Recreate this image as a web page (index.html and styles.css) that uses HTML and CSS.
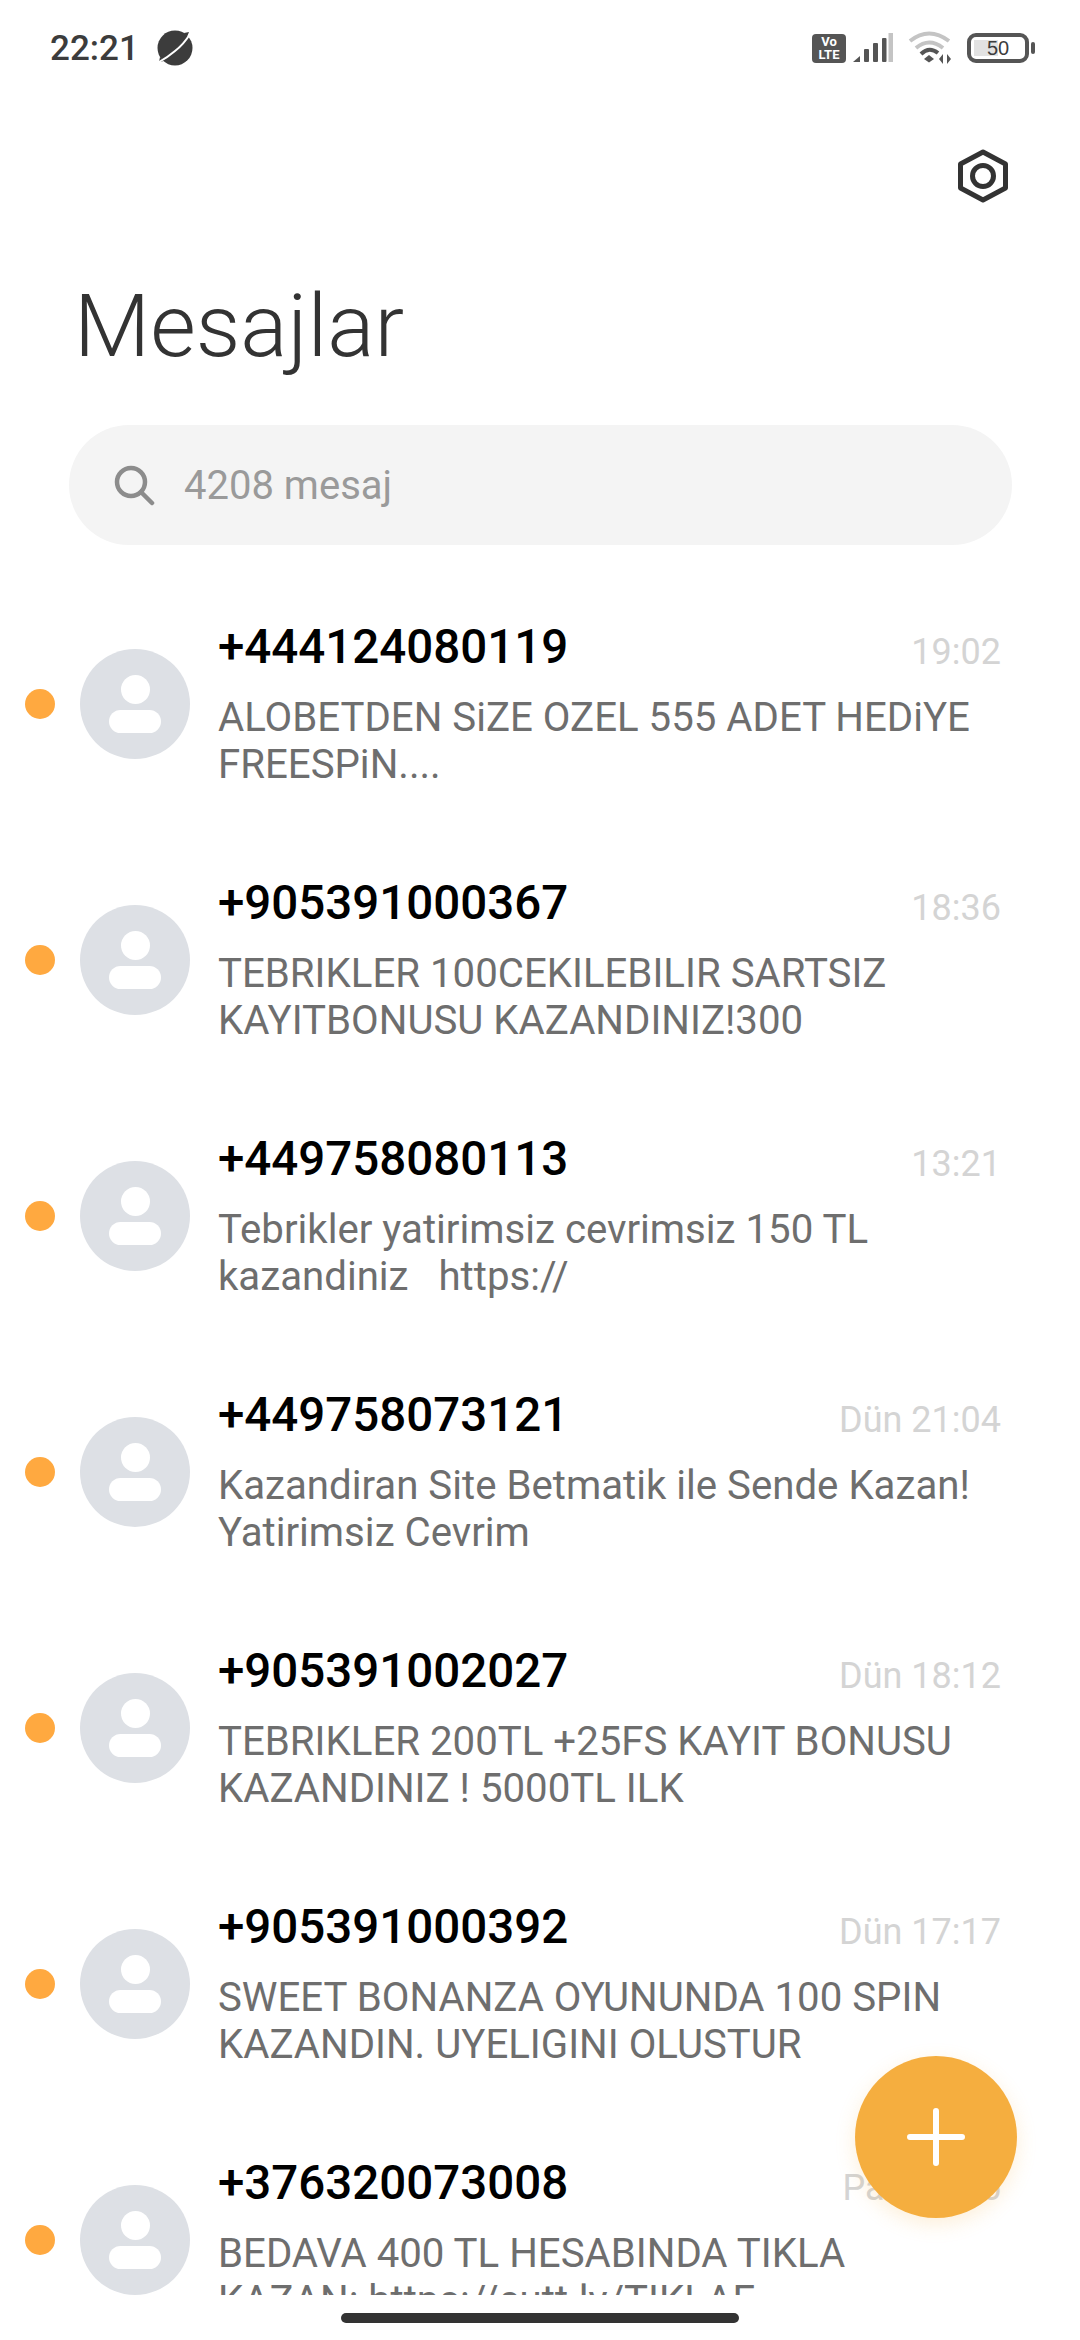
FILE: index.html
```html
<!DOCTYPE html>
<html lang="tr">
<head>
    <meta charset="UTF-8">
    <meta name="viewport" content="width=device-width, initial-scale=1.0">
    <title>Mesajlar</title>
    <link rel="stylesheet" href="styles.css">
</head>
<body>
<div class="screen">
    <div class="status-bar">
        <span class="clock">22:21</span>
        <svg class="planet" width="38" height="36" viewBox="0 0 38 36">
            <circle cx="19" cy="18" r="17.500" fill="#3c3c3c"/>
            <path d="M28 3 L33 2 L31 7 Z M4 27 L3 32 L8 31 Z" fill="#3c3c3c"/>
            <path d="M34 4 Q28 14 19 21 Q12 27 3 32" fill="none" stroke="#fff" stroke-width="2"/>
        </svg>
        <div class="status-right">
            <div class="volte"><span>Vo</span><span>LTE</span></div>
            <svg class="signal" width="40" height="30" viewBox="0 0 40 30">
                <path d="M0 29 L7 23 V29 Z" fill="#555"/>
                <rect x="11" y="16" width="5" height="13" rx="1" fill="#555"/>
                <rect x="20" y="10" width="5" height="19" rx="1" fill="#555"/>
                <rect x="29" y="5" width="4.500" height="24" rx="1" fill="#555"/>
                <rect x="35.500" y="0" width="4.500" height="29" fill="#c4c4c4"/>
            </svg>
            <svg class="wifi" width="44" height="34" viewBox="0 0 44 34">
                <path d="M2 10 Q21 -5 41 10" fill="none" stroke="#c4c4c4" stroke-width="4"/>
                <path d="M8 17 Q21 6 35 17" fill="none" stroke="#c4c4c4" stroke-width="4"/>
                <path d="M13 23 Q21 15 30 22" fill="none" stroke="#555" stroke-width="4"/>
                <path d="M16 28 L21 24 L26 28 L21 31.500 Z" fill="#555"/>
                <path d="M35 23 V33 L31 28 Z M39 23 L43 28 L39 33 Z" fill="#555"/>
            </svg>
            <div class="battery">
                <div class="battery-body">
                    <div class="battery-fill"></div>
                    <span class="battery-text">50</span>
                </div>
                <div class="battery-nub"></div>
            </div>
        </div>
    </div>

    <div class="top-row">
        <svg width="50" height="54" viewBox="0 0 50 54">
            <path d="M25 3 L47.500 15 V39 L25 51 L2.500 39 V15 Z" fill="none" stroke="#333" stroke-width="5" stroke-linejoin="round"/>
            <circle cx="25" cy="27" r="10.500" fill="none" stroke="#333" stroke-width="5"/>
        </svg>
    </div>

    <h1 class="title">Mesajlar</h1>

    <div class="search">
        <svg width="42" height="42" viewBox="0 0 42 42">
            <circle cx="18" cy="18" r="14" fill="none" stroke="#8c8c8c" stroke-width="4.500"/>
            <path d="M28 28 L39 39" stroke="#8c8c8c" stroke-width="4.500" stroke-linecap="round"/>
        </svg>
        <span>4208 mesaj</span>
    </div>

    <div class="list">
        <div class="row">
            <div class="dot"></div>
            <div class="avatar"><div class="avatar-head"></div><div class="avatar-body"></div></div>
            <div class="content">
                <div class="head"><span class="name">+444124080119</span><span class="time">19:02</span></div>
                <div class="msg">ALOBETDEN SiZE OZEL 555 ADET HEDiYE<br>FREESPiN....</div>
            </div>
        </div>
        <div class="row">
            <div class="dot"></div>
            <div class="avatar"><div class="avatar-head"></div><div class="avatar-body"></div></div>
            <div class="content">
                <div class="head"><span class="name">+905391000367</span><span class="time">18:36</span></div>
                <div class="msg">TEBRIKLER 100CEKILEBILIR SARTSIZ<br>KAYITBONUSU KAZANDINIZ!300</div>
            </div>
        </div>
        <div class="row">
            <div class="dot"></div>
            <div class="avatar"><div class="avatar-head"></div><div class="avatar-body"></div></div>
            <div class="content">
                <div class="head"><span class="name">+449758080113</span><span class="time">13:21</span></div>
                <div class="msg">Tebrikler yatirimsiz cevrimsiz 150 TL<br>kazandiniz &nbsp; https://</div>
            </div>
        </div>
        <div class="row">
            <div class="dot"></div>
            <div class="avatar"><div class="avatar-head"></div><div class="avatar-body"></div></div>
            <div class="content">
                <div class="head"><span class="name">+449758073121</span><span class="time">Dün 21:04</span></div>
                <div class="msg">Kazandiran Site Betmatik ile Sende Kazan!<br>Yatirimsiz Cevrim</div>
            </div>
        </div>
        <div class="row">
            <div class="dot"></div>
            <div class="avatar"><div class="avatar-head"></div><div class="avatar-body"></div></div>
            <div class="content">
                <div class="head"><span class="name">+905391002027</span><span class="time">Dün 18:12</span></div>
                <div class="msg">TEBRIKLER 200TL +25FS KAYIT BONUSU<br>KAZANDINIZ ! 5000TL ILK</div>
            </div>
        </div>
        <div class="row">
            <div class="dot"></div>
            <div class="avatar"><div class="avatar-head"></div><div class="avatar-body"></div></div>
            <div class="content">
                <div class="head"><span class="name">+905391000392</span><span class="time">Dün 17:17</span></div>
                <div class="msg">SWEET BONANZA OYUNUNDA 100 SPIN<br>KAZANDIN. UYELIGINI OLUSTUR</div>
            </div>
        </div>
        <div class="row">
            <div class="dot"></div>
            <div class="avatar"><div class="avatar-head"></div><div class="avatar-body"></div></div>
            <div class="content">
                <div class="head"><span class="name">+376320073008</span><span class="time">Paz 18:05</span></div>
                <div class="msg">BEDAVA 400 TL HESABINDA TIKLA<br>KAZAN: https://cutt.ly/TIKLAE</div>
            </div>
        </div>
    </div>

    <div class="nav-area"><div class="handle"></div></div>

    <div class="fab">
        <svg width="58" height="58" viewBox="0 0 58 58">
            <path d="M29 3 V55 M3 29 H55" stroke="#fff" stroke-width="6" stroke-linecap="round"/>
        </svg>
    </div>
</div>
</body>
</html>
```

FILE: styles.css
```css
* {
    box-sizing: border-box;
}
html, body {
    margin: 0;
    padding: 0;
    background: #fff;
}
body {
    font-family: Roboto, "Noto Sans", sans-serif;
}
.screen {
    position: relative;
    width: 1080px;
    height: 2340px;
    overflow: hidden;
    display: flex;
    flex-direction: column;
    background: #fff;
}

/* status bar */
.status-bar {
    height: 96px;
    padding: 0 45px 0 50px;
    display: flex;
    align-items: center;
    color: #3c3c3c;
}
.clock {
    font-size: 35px;
    font-weight: 500;
    margin-right: 17px;
}
.status-right {
    margin-left: auto;
    display: flex;
    align-items: center;
}
.volte {
    width: 34px;
    height: 29px;
    border-radius: 4px;
    background: #555;
    color: #fff;
    font-size: 13px;
    font-weight: 700;
    line-height: 13px;
    display: flex;
    flex-direction: column;
    align-items: center;
    justify-content: center;
    margin-right: 7px;
}
.signal {
    margin-right: 15px;
}
.wifi {
    margin-right: 15px;
}
.battery {
    display: flex;
    align-items: center;
}
.battery-body {
    position: relative;
    width: 62px;
    height: 30px;
    border: 4px solid #555;
    border-radius: 9px;
    display: flex;
    align-items: center;
    justify-content: center;
}
.battery-fill {
    position: absolute;
    left: 3px;
    top: 3px;
    bottom: 3px;
    width: 24px;
    background: #e2e2e2;
}
.battery-text {
    position: relative;
    font-size: 20px;
    font-family: "Liberation Sans", sans-serif;
    color: #3c3c3c;
}
.battery-nub {
    width: 4px;
    height: 12px;
    margin-left: 2px;
    border-radius: 2px;
    background: #555;
}

/* header */
.top-row {
    height: 54px;
    margin-top: 53px;
    padding-right: 72px;
    display: flex;
    justify-content: flex-end;
}
.title {
    margin: 73px 0 0 74px;
    height: 100px;
    font-size: 88px;
    font-weight: 300;
    line-height: 100px;
    color: #333;
}
.search {
    width: 943px;
    height: 120px;
    margin: 49px 0 0 69px;
    padding-left: 44px;
    border-radius: 60px;
    background: #f4f4f4;
    display: flex;
    align-items: center;
    font-size: 40px;
    color: #9a9a9a;
}
.search svg {
    margin-right: 29px;
}

/* message list */
.list {
    flex: 1;
    min-height: 0;
    margin-top: 31px;
    overflow: hidden;
}
.row {
    height: 256px;
    padding: 0 79px 0 25px;
    display: flex;
    align-items: center;
}
.dot {
    flex: none;
    width: 30px;
    height: 30px;
    border-radius: 50%;
    background: #ffa940;
    margin-right: 25px;
}
.avatar {
    flex: none;
    width: 110px;
    height: 110px;
    border-radius: 50%;
    background: #dde0e5;
    margin-right: 28px;
    display: flex;
    flex-direction: column;
    align-items: center;
    padding-top: 26px;
}
.avatar-head {
    width: 29px;
    height: 29px;
    border-radius: 50%;
    background: #fff;
}
.avatar-body {
    width: 52px;
    height: 23px;
    margin-top: 6px;
    border-radius: 12px;
    background: #fff;
}
.content {
    flex: 1;
    min-width: 0;
}
.head {
    display: flex;
    justify-content: space-between;
    align-items: center;
    height: 60px;
    margin-bottom: 13px;
}
.name {
    font-size: 47.500px;
    font-weight: 500;
    color: #000;
    margin-top: -8px;
}
.time {
    font-size: 36px;
    color: #d4d4d4;
    margin-top: 3px;
}
.msg {
    font-size: 40.200px;
    line-height: 47px;
    color: #6e6e6e;
}

/* bottom */
.nav-area {
    flex: none;
    height: 45px;
    display: flex;
    justify-content: center;
    padding-top: 18px;
}
.handle {
    width: 398px;
    height: 10px;
    border-radius: 5px;
    background: #333;
}
.fab {
    position: absolute;
    left: 855px;
    top: 2056px;
    width: 162px;
    height: 162px;
    border-radius: 50%;
    background: #f5ae3f;
    box-shadow: 0 6px 20px rgba(245, 174, 63, 0.2);
    display: flex;
    align-items: center;
    justify-content: center;
}
```
